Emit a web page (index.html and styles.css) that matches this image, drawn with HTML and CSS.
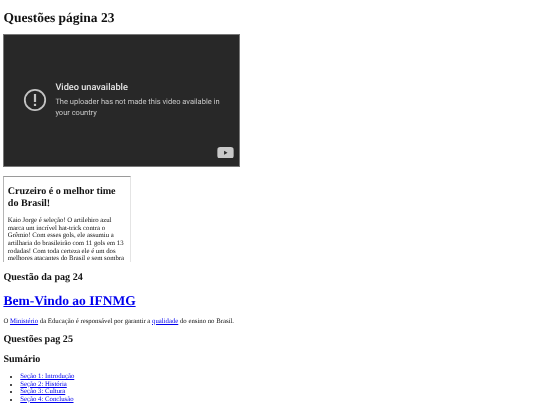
FILE: index.html
```html
<!DOCTYPE html>
<html lang="pt-BR">
<head>
<meta charset="utf-8">
<title>Questões</title>
<link rel="stylesheet" href="styles.css">
</head>
<body>
<h1 class="title">Questões página 23</h1>
<div class="video">
  <div class="video-msg">
    <svg class="alert" viewBox="0 0 24 24" aria-hidden="true"><circle cx="12" cy="12" r="10.2" fill="none" stroke="#c4c4c4" stroke-width="1.8"/><rect x="10.9" y="6" width="2.2" height="8" fill="#c4c4c4"/><rect x="10.9" y="15.8" width="2.2" height="2.2" fill="#c4c4c4"/></svg>
    <div class="video-text">
      <div class="video-head">Video unavailable</div>
      <div class="video-sub">The uploader has not made this video available in your country</div>
    </div>
  </div>
  <svg class="yt" viewBox="0 0 17 12" aria-hidden="true"><rect width="17" height="12" rx="3" fill="#c9c9c9"/><path d="M7 4l3.6 2L7 8z" fill="#2a2a2a"/></svg>
</div>
<div class="frame">
  <h2 class="frame-title">Cruzeiro é o melhor time do Brasil!</h2>
  <p class="frame-text">Kaio Jorge é seleção! O artilehiro azul marca um incrível hat-trick contra o Grêmio! Com esses gols, ele assumiu a artilharia do brasileirão com 11 gols em 13 rodadas! Com toda certeza ele é um dos melhores atacantes do Brasil e sem sombra</p>
</div>
<h3 class="sub first">Questão da pag 24</h3>
<h1 class="welcome"><a href="#">Bem-Vindo ao IFNMG</a></h1>
<p class="line">O <a href="#">Ministério</a> da Educação é responsável por garantir a <a href="#">qualidade</a> do ensino no Brasil.</p>
<h3 class="sub">Questões pag 25</h3>
<h3 class="sub">Sumário</h3>
<ul class="toc">
  <li><a href="#">Seção 1: Introdução</a></li>
  <li><a href="#">Seção 2: História</a></li>
  <li><a href="#">Seção 3: Cultura</a></li>
  <li><a href="#">Seção 4: Conclusão</a></li>
</ul>
</body>
</html>
```
FILE: styles.css
```css
html, body { margin: 0; padding: 0; background: #fff; overflow: hidden; height: 405px; }
body { padding: 0 3.4px; font-family: "Liberation Serif", "Times New Roman", serif; color: #111; font-size: 6.75px; line-height: 7.65px; text-rendering: geometricPrecision; filter: blur(0.35px); }
a { color: #0000ee; }
.title { font-size: 13.5px; line-height: 15px; margin: 10px 0 0; font-weight: bold; }
.video { width: 236.5px; height: 132.5px; margin-top: 9px; background: #282828; display: flex; align-items: center; position: relative; box-sizing: border-box; border: 0.5px solid #777; }
.video-msg { display: flex; align-items: flex-start; padding: 0 8px 0 18.6px; }
.alert { width: 24px; height: 24px; margin: 6.5px 8.4px 0 0; flex: none; }
.video-text { font-family: Roboto, "Liberation Sans", sans-serif; color: #c8c8c8; }
.video-head { font-size: 9.2px; line-height: 12px; color: #e4e4e4; font-weight: 500; }
.video-sub { font-size: 7.5px; line-height: 10.8px; margin-top: 3.5px; }
.yt { position: absolute; right: 4.5px; bottom: 7.5px; width: 17px; height: 11.5px; }
.frame { width: 128px; height: 85.5px; margin-top: 9.5px; box-sizing: border-box; border-top: 1px solid #9a9a9a; border-left: 1px solid #b5b5b5; border-right: 0.5px solid #e4e4e4; padding: 0 3.4px; overflow: hidden; }
.frame-title { font-size: 10.1px; line-height: 11.8px; margin: 9px 0 0; }
.frame-text { margin: 7.5px 0 0; }
.sub { font-size: 10.1px; line-height: 11px; margin: 9px 0 0; font-weight: bold; }
.sub.first { margin-top: 10px; }
.welcome { font-size: 13.5px; line-height: 15px; margin: 10px 0 0; }
.line { margin: 10px 0 0; }
.toc { margin: 8px 0 0; padding: 0 0 0 16.9px; font-size: 6.75px; line-height: 7.5px; }
```
